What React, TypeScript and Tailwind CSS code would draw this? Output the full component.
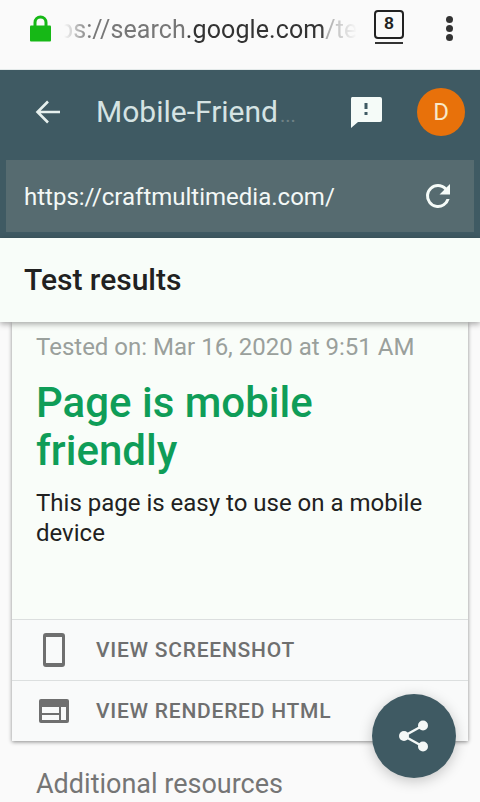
export default function App() {
  return (
    <div className="relative w-[480px] h-[802px] overflow-hidden bg-[#fafafa] font-['Roboto',sans-serif]">
      {/* browser bar */}
      <div className="h-[69px] flex items-center bg-[#fafafa] border-b border-[#e4eaea] box-content pb-0">
        <div className="w-[28px] ml-[30px] -mt-[13px] shrink-0">
          <svg width="21" height="27" viewBox="0 0 21 27" className="block">
            <path d="M5 12V7.5a5.5 5.5 0 0 1 11 0V12" fill="none" stroke="#16b816" strokeWidth="3" />
            <rect x="0" y="10.5" width="21" height="16" rx="1" fill="#16b816" />
          </svg>
        </div>
        <div className="w-[299px] pl-[1px] -mt-[10px] text-[25px] leading-[30px] whitespace-nowrap tracking-[0.1px] [mask-image:linear-gradient(90deg,transparent_6px,black_32px,black_262px,transparent_299px)]">
          <span className="text-[#777]">ps://search</span>
          <span className="text-[#333]">.google.com</span>
          <span className="text-[#999]">/tes</span>
        </div>
        <div className="ml-[17px] -mt-[16px] w-[30px] flex flex-col items-center shrink-0">
          <div className="w-[30px] h-[29px] border-[2.5px] border-[#222] rounded-[4px] flex items-center justify-center text-[17px] font-bold text-[#222] font-['Liberation_Sans',sans-serif]">8</div>
          <div className="w-[28px] h-[2px] bg-[#333] mt-[3px]" />
        </div>
        <div className="ml-[42px] -mt-[13px] flex flex-col gap-[2px] shrink-0">
          <div className="w-[7px] h-[7px] rounded-full bg-[#333]" />
          <div className="w-[7px] h-[7px] rounded-full bg-[#333]" />
          <div className="w-[7px] h-[7px] rounded-full bg-[#333]" />
        </div>
      </div>

      {/* app header */}
      <div className="h-[168px] bg-[#3f5a63] flex flex-col">
        <div className="h-[90px] flex items-center pb-[6px]">
          <svg className="ml-[35px] shrink-0" width="26" height="26" viewBox="0 0 26 26">
            <path d="M25 13H3M13 2.5 2.5 13 13 23.5" fill="none" stroke="#e6f0ee" strokeWidth="2.6" />
          </svg>
          <div className="ml-[35px] w-[206px] flex items-baseline text-[30px] leading-[34px] text-[#d5e3e3] whitespace-nowrap">
            <span>Mobile-Friend</span>
            <span className="ml-[2px] text-[#6f8286] text-[20px] leading-none">...</span>
          </div>
          <svg className="ml-[48px] shrink-0" width="32" height="31" viewBox="0 0 32 31">
            <path d="M2 0h28a2 2 0 0 1 2 2v21a2 2 0 0 1-2 2H8l-7 6V2a2 2 0 0 1 1-2Z" fill="#f5fbf8" />
            <rect x="14.5" y="6" width="3" height="6" fill="#3f5a63" />
            <rect x="14.5" y="15" width="3" height="3" fill="#3f5a63" />
          </svg>
          <div className="ml-[35px] w-[48px] h-[48px] rounded-full bg-[#e8710a] flex items-center justify-center text-[24px] text-[#f8e8c8] shrink-0">D</div>
        </div>
        <div className="mx-[6px] h-[72px] bg-[#566b70] flex items-center justify-between pl-[18px] pr-[18px]">
          <span className="text-[24px] text-[#f3f8f6] mt-[1px]">https://craftmultimedia.com/</span>
          <svg width="36" height="36" viewBox="0 0 24 24" fill="#f5fbf8">
            <path d="M17.65 6.35A7.96 7.96 0 0 0 12 4a8 8 0 1 0 7.73 10h-2.08A6 6 0 1 1 12 6c1.66 0 3.14.69 4.22 1.78L13 11h7V4l-2.35 2.35Z" />
          </svg>
        </div>
      </div>

      {/* sub header */}
      <div className="relative z-10 h-[84px] bg-[#f8fdf9] flex items-center pl-[24px] shadow-[0_2px_6px_rgba(0,0,0,0.35)]">
        <span className="text-[30px] font-medium text-[#212121] -mt-[1px]">Test results</span>
      </div>

      {/* card */}
      <div className="mx-[12px] bg-[#f9fafa] shadow-[0_1px_4px_rgba(0,0,0,0.45)]">
        <div className="h-[297px] bg-[#f9fdf9] pl-[24px] pt-[10px]">
          <div className="text-[24px] leading-[30px] text-[#9aa09c]">Tested on: Mar 16, 2020 at 9:51 AM</div>
          <div className="mt-[17px] text-[42px] leading-[48px] font-medium text-[#0f9d58]">Page is mobile<br />friendly</div>
          <div className="mt-[13px] text-[24px] leading-[30px] text-[#212121]">This page is easy to use on a mobile<br />device</div>
        </div>
        <div className="h-[61px] border-t border-[#dcdfdf] flex items-center">
          <svg className="ml-[31px] shrink-0" width="22" height="34" viewBox="0 0 22 34">
            <path fillRule="evenodd" d="M3 0h16a3 3 0 0 1 3 3v28a3 3 0 0 1-3 3H3a3 3 0 0 1-3-3V3a3 3 0 0 1 3-3Zm0 4v26h16V4H3Z" fill="#6f6f6f" />
          </svg>
          <span className="ml-[31px] mt-[1px] text-[21px] font-medium text-[#6f6f6f] tracking-[0.75px]">VIEW SCREENSHOT</span>
        </div>
        <div className="h-[61px] border-t border-[#dcdfdf] flex items-center">
          <svg className="ml-[27px] shrink-0" width="30" height="24" viewBox="0 0 30 24">
            <path fillRule="evenodd" d="M2 0h26a2 2 0 0 1 2 2v20a2 2 0 0 1-2 2H2a2 2 0 0 1-2-2V2a2 2 0 0 1 2-2Zm1 8v6h17V8H3Zm0 8v5h17v-5H3Zm19-8v13h5V8h-5Z" fill="#6f6f6f" />
          </svg>
          <span className="ml-[27px] mt-[1px] text-[21px] font-medium text-[#6f6f6f] tracking-[0.75px]">VIEW RENDERED HTML</span>
        </div>
      </div>

      <div className="mt-[27px] pl-[36px] text-[27px] leading-[32px] text-[#757575]">Additional resources</div>

      {/* FAB */}
      <div className="absolute left-[372px] top-[694px] w-[84px] h-[84px] rounded-full bg-[#3f5a63] flex items-center justify-center shadow-[0_3px_14px_rgba(0,0,0,0.22)]">
        <svg width="32" height="32" viewBox="0 0 32 32" fill="#f4f8f7">
          <circle cx="25" cy="5.5" r="5" />
          <circle cx="6" cy="16" r="5" />
          <circle cx="25" cy="26.5" r="5" />
          <path d="M25 5.5 6 16l19 10.5" fill="none" stroke="#f4f8f7" strokeWidth="2.4" />
        </svg>
      </div>
    </div>
  );
}
